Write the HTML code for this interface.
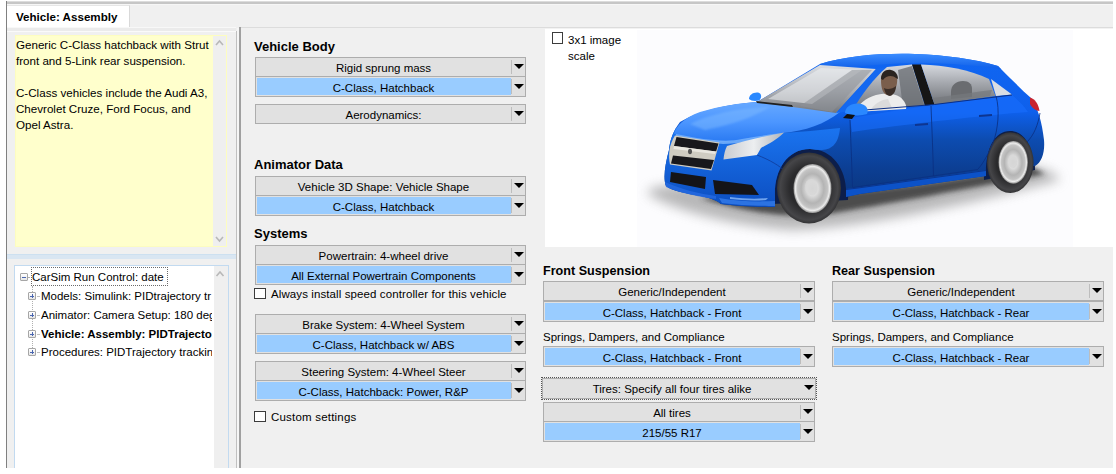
<!DOCTYPE html>
<html><head><meta charset="utf-8">
<style>
*{box-sizing:border-box}
html,body{margin:0;padding:0;background:#fff;width:1116px;height:474px;overflow:hidden;position:relative;font-family:"Liberation Sans",sans-serif;font-size:11.5px;color:#000}
.a{position:absolute}
.t{position:absolute;white-space:nowrap;line-height:12px}
.h{position:absolute;white-space:nowrap;font-weight:bold;font-size:13px;line-height:13px}
.dd{position:absolute;height:20px;background:#e1e1e1;border:1px solid #adadad}
.dd.b{height:21px}
.dd .tx{position:absolute;left:0;right:14px;top:4px;text-align:center;white-space:nowrap;line-height:12px}
.dd .sep{position:absolute;right:13px;top:2px;bottom:2px;width:1px;background:#bdbdbd}
.dd .ar{position:absolute;right:1.5px;top:6px;width:0;height:0;border-left:5px solid transparent;border-right:5px solid transparent;border-top:5.5px solid #000}
.dd.b .ar{top:7px}
.dd .bl{position:absolute;left:1px;top:1px;bottom:1px;right:14px;background:#99ccff}
.dd.b .tx{top:5px}
.cb{position:absolute;width:12px;height:11px;border:1px solid #3c3c3c;background:#fff}
</style></head><body>
<!-- frame -->
<div class="a" style="left:6px;top:1px;width:1107px;height:467px;background:#f0f0f0"></div>
<div class="a" style="left:6px;top:1px;width:1px;height:467px;background:#808080"></div>
<div class="a" style="left:7px;top:1px;width:1106px;height:1px;background:#dcdcdc"></div>
<div class="a" style="left:7px;top:2px;width:1106px;height:2px;background:#c6c6c6"></div>
<div class="a" style="left:7px;top:4px;width:1106px;height:1px;background:#f6f6f6"></div>
<!-- tab -->
<div class="a" style="left:7px;top:5px;width:123px;height:22px;background:#fff;border-top:1px solid #e6e6e6;border-right:1px solid #d9d9d9"></div>
<div class="t" style="left:16px;top:11px;font-weight:bold;font-size:11.6px">Vehicle: Assembly</div>
<div class="a" style="left:7px;top:27px;width:229px;height:1px;background:#f8f8f8"></div>
<div class="a" style="left:241px;top:27px;width:872px;height:1px;background:#dcdcdc"></div><div class="a" style="left:545px;top:28px;width:568px;height:1px;background:#f2f2f2;z-index:1"></div>
<div class="a" style="left:7px;top:28px;width:229px;height:3px;background:#ebebeb"></div>

<!-- left panel -->
<div class="a" style="left:7px;top:31px;width:229px;height:1px;background:#fafafa"></div>
<div class="a" style="left:15px;top:35px;width:212px;height:212px;background:#ffffcc;border:1px solid #fdfdc0"></div>
<div class="a" style="left:213px;top:36px;width:13px;height:210px;background:#efefef"></div>
<svg class="a" style="left:213px;top:36px" width="14" height="212"><path d="M3,9 L6.5,5 L10,9" stroke="#b8b8b8" stroke-width="1.6" fill="none"/><path d="M3,201 L6.5,205 L10,201" stroke="#b8b8b8" stroke-width="1.6" fill="none"/></svg>
<div class="t" style="left:16px;top:37px;line-height:16px;font-size:11.6px">Generic C-Class hatchback with Strut<br>front and 5-Link rear suspension.<br><br>C-Class vehicles include the Audi A3,<br>Chevrolet Cruze, Ford Focus, and<br>Opel Astra.</div>
<div class="a" style="left:7px;top:254px;width:229px;height:5px;background:#d9e6f2;border-top:1px solid #cde0f0"></div>
<div class="a" style="left:236px;top:31px;width:1px;height:437px;background:#c0c0c0"></div>
<div class="a" style="left:237px;top:28px;width:2px;height:440px;background:#f6f6f6"></div>
<div class="a" style="left:14px;top:265px;width:215px;height:203px;background:#fff;border:1px solid #c2daf0;border-bottom:none"></div>
<div class="a" style="left:214px;top:266px;width:14px;height:202px;background:#efefef"></div>

<style>
.tb{position:absolute;width:8px;height:8px;border:1px solid #a6a6a6;border-radius:1px;background:linear-gradient(#fff,#e6e6e6)}
.tb i{position:absolute;left:1px;top:2.5px;width:4px;height:1px;background:#4a66b0}
.tb b{position:absolute;left:2.5px;top:1px;width:1px;height:4px;background:#4a66b0}
.tr{position:absolute;white-space:nowrap;line-height:12px;overflow:hidden}
</style>
<div class="tb" style="left:20px;top:273px"><i></i></div>
<div class="a" style="left:28px;top:277px;width:2px;height:1px;background:#b0b0b0"></div>
<div class="a" style="left:31px;top:267px;width:137px;height:19px;border:1px dotted #6a6a6a"></div>
<div class="tr" style="left:32px;top:271px">CarSim Run Control: date</div>
<div class="a" style="left:32px;top:286px;width:0;height:64px;border-left:1px dotted #b0b0b0"></div>
<div class="tb" style="left:28px;top:292px"><i></i><b></b></div>
<div class="a" style="left:37px;top:296px;width:3px;height:1px;background:#c0c0c0"></div>
<div class="tr" style="left:41px;top:290px;width:171px;">Models: Simulink: PIDtrajectory tr</div>
<div class="tb" style="left:28px;top:311px"><i></i><b></b></div>
<div class="a" style="left:37px;top:315px;width:3px;height:1px;background:#c0c0c0"></div>
<div class="tr" style="left:41px;top:309px;width:171px;">Animator: Camera Setup: 180 deg</div>
<div class="tb" style="left:28px;top:330px"><i></i><b></b></div>
<div class="a" style="left:37px;top:334px;width:3px;height:1px;background:#c0c0c0"></div>
<div class="tr" style="left:41px;top:328px;width:171px;font-weight:bold;">Vehicle: Assembly: PIDTrajectory</div>
<div class="tb" style="left:28px;top:348px"><i></i><b></b></div>
<div class="a" style="left:37px;top:352px;width:3px;height:1px;background:#c0c0c0"></div>
<div class="tr" style="left:41px;top:346px;width:171px;">Procedures: PIDTrajectory tracking</div>
<svg class="a" style="left:214px;top:266px" width="14" height="20"><path d="M2.5,10 L6,6 L9.5,10" stroke="#b8b8b8" stroke-width="1.6" fill="none"/></svg>
<!-- splitter dark line -->
<div class="a" style="left:239px;top:27px;width:2px;height:441px;background:#a0a0a0"></div>

<!-- right white area -->
<div class="a" style="left:545px;top:28px;width:568px;height:219px;background:#fff"></div>
<div class="a" style="left:637px;top:30px;width:436px;height:217px;background:#fcfcfe"></div>
<!--CAR-->
<svg class="a" style="left:637px;top:30px" width="436" height="217" viewBox="637 30 436 217">
<defs>
<filter id="blur6" x="-20%" y="-80%" width="140%" height="260%"><feGaussianBlur stdDeviation="6"/></filter>
<filter id="blur3" x="-20%" y="-50%" width="140%" height="200%"><feGaussianBlur stdDeviation="2.5"/></filter>
<filter id="blur1" x="-20%" y="-20%" width="140%" height="140%"><feGaussianBlur stdDeviation="0.8"/></filter>
<linearGradient id="sideG" x1="0" y1="0" x2="0" y2="1">
<stop offset="0" stop-color="#1066f2"/><stop offset="0.38" stop-color="#0e60ec"/><stop offset="0.56" stop-color="#0d4cb0"/><stop offset="0.76" stop-color="#0c3e92"/><stop offset="1" stop-color="#0a3276"/>
</linearGradient>
<linearGradient id="hoodG" x1="0" y1="0" x2="0" y2="1">
<stop offset="0" stop-color="#66a8ff"/><stop offset="0.5" stop-color="#4c96ff"/><stop offset="1" stop-color="#2a7af2"/>
</linearGradient>
<linearGradient id="frontG" x1="0" y1="0" x2="0" y2="1">
<stop offset="0" stop-color="#1a74f0"/><stop offset="1" stop-color="#0c4ec0"/>
</linearGradient>
<linearGradient id="roofG" x1="0" y1="0" x2="0" y2="1">
<stop offset="0" stop-color="#3a8cff"/><stop offset="1" stop-color="#0e5ee8"/>
</linearGradient>
<linearGradient id="glassG" x1="0" y1="0" x2="0" y2="1">
<stop offset="0" stop-color="#dadde2"/><stop offset="0.55" stop-color="#acafb5"/><stop offset="1" stop-color="#74777c"/>
</linearGradient>
<linearGradient id="winG" x1="0" y1="0" x2="0" y2="1">
<stop offset="0" stop-color="#d6d9df"/><stop offset="0.45" stop-color="#a6a9af"/><stop offset="1" stop-color="#707378"/>
</linearGradient>
<linearGradient id="lightG" x1="0" y1="0" x2="1" y2="0">
<stop offset="0" stop-color="#c8cbd0"/><stop offset="0.5" stop-color="#eceef0"/><stop offset="1" stop-color="#b0b4ba"/>
</linearGradient>
<radialGradient id="rimG" cx="0.5" cy="0.5" r="0.5">
<stop offset="0" stop-color="#c8c8c8"/><stop offset="0.3" stop-color="#dcdcdc"/><stop offset="0.6" stop-color="#b4b4b4"/><stop offset="0.8" stop-color="#c4c4c4"/><stop offset="0.9" stop-color="#ececec"/><stop offset="1" stop-color="#8a8a8a"/>
</radialGradient>
<radialGradient id="tireG" cx="0.5" cy="0.5" r="0.5">
<stop offset="0.6" stop-color="#2a2a2c"/><stop offset="0.9" stop-color="#454548"/><stop offset="1" stop-color="#333335"/>
</radialGradient>
</defs>
<!-- shadow -->
<path d="M648,194 C670,208 720,224 790,230 C860,228 960,206 1060,180 C1052,168 1030,164 1000,168 C920,182 800,192 700,186 C670,184 646,186 648,194 Z" fill="#808080" opacity="0.55" filter="url(#blur6)"/>
<path d="M700,198 C740,210 790,222 840,212 C900,202 980,186 1045,174 L1030,166 C960,178 880,192 780,196 Z" fill="#303030" opacity="0.8" filter="url(#blur3)"/>
<!-- wheel wells (dark) -->
<path d="M773,204 C772,172 786,147 810,147 C836,147 850,172 848,200 Z" fill="#0d1e4a"/>
<path d="M984,180 C983,150 994,129 1010,129 C1026,129 1035,146 1035,170 Z" fill="#0d1e4a"/>
<!-- body base silhouette -->
<path d="M666,186 C663,178 665,165 669,150 C670,140 673,131 680,122 C700,110 730,104 757,102 L820,64 C845,56 880,53 915,54 C945,55 975,59 998,66 L1001,69 C1012,80 1022,90 1031,98 C1038,108 1042,122 1044,140 C1045,152 1042,162 1035,166 L1033,166 C1033,146 1024,131 1010,131 C994,131 985,150 986,176 L860,194 L846,197 C848,172 834,149 810,149 C786,149 774,172 775,196 L775,207 C760,207 735,206 721,204 C716,200 710,198 700,196 C685,193 672,191 666,186 Z" fill="url(#sideG)"/>
<!-- roof -->
<path d="M820,64 C845,56 880,53 915,54 C945,55 975,59 998,66 L1001,69 C980,66 950,63 920,63 C890,63 860,66 830,69 Z" fill="url(#roofG)"/>
<!-- shoulder highlight -->
<path d="M850,118 C900,110 960,100 1012,95 C1018,100 1024,106 1028,112 C980,116 910,124 852,132 Z" fill="#1a70ff" opacity="0.55"/>
<!-- front fascia -->
<path d="M669,150 C670,140 673,133 676,128 C700,136 740,142 784,133 C800,132 820,130 840,128 C838,150 826,152 810,149 C786,149 774,172 775,196 L775,207 C760,207 735,206 721,204 C716,200 710,198 700,196 C685,193 672,191 666,186 C663,178 665,165 669,150 Z" fill="url(#frontG)"/>
<!-- hood -->
<path d="M674,134 C676,126 684,118 700,112 C720,106 740,103 757,102 C790,104 820,108 840,112 C825,124 805,131 783,133 C760,137 742,140 723,142 C705,140 688,137 674,134 Z" fill="url(#hoodG)"/>
<path d="M690,124 C710,114 740,108 770,107 C755,116 735,124 705,130 Z" fill="#80bcff" opacity="0.45" filter="url(#blur1)"/>
<path d="M676,134 C700,139 725,143 742,139 C760,136 772,134 784,133 C770,138 750,143 723,144 C705,142 690,139 676,136 Z" fill="#8cc0ff" opacity="0.7"/>
<!-- windshield -->
<path d="M757,102 L820,65 L876,69 L836,113 Z" fill="url(#glassG)"/>
<path d="M768,99 L821,68 L862,70 L812,104 Z" fill="#eef0f3" opacity="0.55"/>
<path d="M800,106 L852,70 L872,70 L832,112 Z" fill="#8e9197" opacity="0.55"/>
<!-- wiper -->
<path d="M756,101 L792,105 L793,107 L757,103 Z" fill="#202020"/>
<!-- A pillar -->
<path d="M876,69 L887,67 L852,111 L836,113 Z" fill="#1468f0"/>
<!-- front door window -->
<path d="M852,111 C862,94 874,78 887,67 L912,64.5 L925,105.5 Z" fill="url(#winG)"/>
<!-- driver -->
<path d="M898,70 L912,66 L924,105 L903,107 Z" fill="#6d7076" opacity="0.8"/>
<path d="M855,112 C858,104 866,98 876,95 C884,93 894,93 900,97 C905,101 907,106 906,109 Z" fill="#ececec"/>
<path d="M870,111 C874,104 880,100 888,99 L892,108 Z" fill="#d0d0d0" opacity="0.6"/>
<path d="M881,80 C881,73 886,70 891,71 C896,72 898,77 897,83 C896,90 893,95 888,95 C883,95 881,88 881,80 Z" fill="#7a5e4c"/>
<path d="M881,79 C881,72 886,69 891,70 C896,71 898,75 898,79 L896,78 C893,75 886,75 883,80 Z" fill="#2a2420"/>
<path d="M884,88 C885,93 887,96 890,96 C894,95 896,90 896,86 C893,89 887,90 884,88 Z" fill="#3a2e28"/>
<!-- B pillar -->
<path d="M912,64.5 L921,64.5 L934.5,104.5 L925,105.5 Z" fill="#161616"/>
<!-- rear door window -->
<path d="M921,64.5 C945,65 970,70 989,79 L995.5,96 L934.5,104.5 Z" fill="url(#winG)"/>
<path d="M951,92 C951,85 956,81 963,81 C969,81 972,84 972,89 L972,97 L951,99 Z" fill="#6a6c70"/>
<path d="M935,104 L990,96 L992,90 C975,92 950,96 932,98 Z" fill="#76797e" opacity="0.7"/>
<!-- rear quarter window -->
<path d="M991,79 L1012,94.5 L996,96 Z" fill="#d9dde3"/>
<!-- window frame line -->
<path d="M852,111 L934.5,104.5 L1012,95" stroke="#0c2f85" stroke-width="1" fill="none"/>
<!-- grille frame -->
<path d="M675,135.5 L719.5,142.5 L711.5,170.5 L670,164.5 C668,155 669,145 675,135.5 Z" fill="#cfccc2"/>
<path d="M676.5,137 L718.5,143.5 L716,151.5 L674,146 Z" fill="#18181c"/>
<path d="M673,155.5 L714,160 L711,169 L671,163.5 Z" fill="#18181c"/>
<path d="M674,146 L716,151.5 L715,154 L673.5,149 Z" fill="#e9e7e0"/>
<ellipse cx="690" cy="151.5" rx="2" ry="2.8" fill="#555"/>
<!-- headlight -->
<path d="M727,146 C745,141 765,136 784,132.5 C777,140 768,144 761,148 L757,155 L723.5,159.5 C724,154 725,150 727,146 Z" fill="url(#lightG)"/>
<!-- lower intakes -->
<path d="M671,172 L706,177 L705,189 L670,182 Z" fill="#141418"/>
<path d="M713,180 L752,185 L759,195 L715,194 Z" fill="#141418"/>
<!-- bumper lower highlight -->
<path d="M719,198 C735,201 755,202 775,201 L775,206 C760,206 736,205 722,203 Z" fill="#3b82f0" opacity="0.7"/>
<path d="M730,197 C745,199 758,199 768,198 L766,200 C752,201 740,200 730,199 Z" fill="#9cc8ff" opacity="0.7"/>
<path d="M665,182 C680,189 700,194 716,196 L716,199 C700,197 680,193 666,187 Z" fill="#2a6ee6" opacity="0.7"/>
<!-- fender crease -->
<path d="M757,155 C770,160 780,166 786,172" stroke="#0f3a98" stroke-width="0.8" fill="none"/>
<!-- front wheel -->
<ellipse cx="809" cy="188" rx="32" ry="35.5" fill="url(#tireG)"/>
<ellipse cx="812.5" cy="188.5" rx="19" ry="24.6" fill="url(#rimG)"/>
<ellipse cx="811" cy="187" rx="6" ry="8" fill="#d8d8d8" opacity="0.8"/>
<!-- rear wheel -->
<ellipse cx="1010.3" cy="162.6" rx="23.3" ry="30.4" fill="url(#tireG)"/>
<ellipse cx="1013.2" cy="162.3" rx="14.7" ry="21.4" fill="url(#rimG)"/>
<ellipse cx="1012.5" cy="161" rx="4.5" ry="6.5" fill="#d8d8d8" opacity="0.8"/>
<!-- sill -->
<path d="M846,197 L860,194 L986,176 L986,170 L858,187.5 L846,189 Z" fill="#0c52c8"/>
<path d="M846,189.5 L858,188 L986,170.5" stroke="#0a2e80" stroke-width="0.8" fill="none"/>
<!-- mirrors -->
<path d="M845,113 C845,107 851,103 859,103.5 C866,104 869,109 867,114 C861,116 851,116 845,113 Z" fill="#2a88ff"/>
<path d="M847,114 L855,115 L852,119 L843,118 Z" fill="#111"/>
<path d="M749,99 C749,95 753,92 758,92.5 C762,93.5 762,98 759,100.5 C755,101.5 751,101 749,99 Z" fill="#2a88ff"/>
<!-- door lines -->
<path d="M931,106 C932,130 933,155 933.5,176" stroke="#0a2e80" stroke-width="0.8" fill="none"/>
<path d="M850,120 C851,145 852,170 852.5,187" stroke="#0a2e80" stroke-width="0.8" fill="none"/>
<path d="M996,96 C1000,110 998,130 993,143 C988,155 982,165 978,169" stroke="#0a2e80" stroke-width="0.8" fill="none"/>
<path d="M852.5,187.5 L978,169.5" stroke="#0a2e80" stroke-width="0.7" fill="none"/>
<path d="M915,125 L928,124" stroke="#0e3590" stroke-width="2.2" fill="none"/>
<path d="M979,116 L992,115" stroke="#0e3590" stroke-width="2.2" fill="none"/>
<!-- taillight -->
<path d="M1030,97.5 C1035,99 1038.5,104 1039.5,111 C1036,111 1032,108 1030,104 Z" fill="#c8242e"/>
<path d="M1040,113 C1038,125 1034,135 1027,142" stroke="#0a2e80" stroke-width="0.8" fill="none"/>
</svg>

<!--/CAR-->

<div class="h" style="left:254px;top:40px">Vehicle Body</div>
<div class="dd" style="left:255px;top:57px;width:271px;height:20px"><div class="sep"></div><div class="tx">Rigid sprung mass</div><div class="ar"></div></div><div class="dd b" style="left:255px;top:76px;width:271px;height:21px"><div class="bl"></div><div class="sep"></div><div class="tx">C-Class, Hatchback</div><div class="ar"></div></div>
<div class="dd" style="left:255px;top:104px;width:271px;height:20px"><div class="sep"></div><div class="tx">Aerodynamics:</div><div class="ar"></div></div>
<div class="h" style="left:254px;top:158px">Animator Data</div>
<div class="dd" style="left:255px;top:176px;width:271px;height:20px"><div class="sep"></div><div class="tx">Vehicle 3D Shape: Vehicle Shape</div><div class="ar"></div></div><div class="dd b" style="left:255px;top:195px;width:271px;height:21px"><div class="bl"></div><div class="sep"></div><div class="tx">C-Class, Hatchback</div><div class="ar"></div></div>
<div class="h" style="left:254px;top:227px">Systems</div>
<div class="dd" style="left:255px;top:245px;width:271px;height:20px"><div class="sep"></div><div class="tx">Powertrain: 4-wheel drive</div><div class="ar"></div></div><div class="dd b" style="left:255px;top:264px;width:271px;height:21px"><div class="bl"></div><div class="sep"></div><div class="tx">All External Powertrain Components</div><div class="ar"></div></div>
<div class="cb" style="left:254px;top:288px"></div><div class="t" style="left:271px;top:288px;letter-spacing:0.1px">Always install speed controller for this vehicle</div>
<div class="dd" style="left:255px;top:314px;width:271px;height:20px"><div class="sep"></div><div class="tx">Brake System: 4-Wheel System</div><div class="ar"></div></div><div class="dd b" style="left:255px;top:333px;width:271px;height:21px"><div class="bl"></div><div class="sep"></div><div class="tx">C-Class, Hatchback w/ ABS</div><div class="ar"></div></div>
<div class="dd" style="left:255px;top:361px;width:271px;height:20px"><div class="sep"></div><div class="tx">Steering System: 4-Wheel Steer</div><div class="ar"></div></div><div class="dd b" style="left:255px;top:380px;width:271px;height:21px"><div class="bl"></div><div class="sep"></div><div class="tx">C-Class, Hatchback: Power, R&amp;P</div><div class="ar"></div></div>
<div class="cb" style="left:254px;top:411px"></div><div class="t" style="left:271px;top:411px;letter-spacing:0.2px">Custom settings</div>
<div class="h" style="left:543px;top:265px;font-size:12.6px">Front Suspension</div>
<div class="dd" style="left:543px;top:281px;width:272px;height:20px"><div class="sep"></div><div class="tx">Generic/Independent</div><div class="ar"></div></div><div class="dd b" style="left:543px;top:301px;width:272px;height:21px"><div class="bl"></div><div class="sep"></div><div class="tx">C-Class, Hatchback - Front</div><div class="ar"></div></div>
<div class="t" style="left:543px;top:331px">Springs, Dampers, and Compliance</div>
<div class="dd b" style="left:543px;top:346px;width:272px;height:21px"><div class="bl"></div><div class="sep"></div><div class="tx">C-Class, Hatchback - Front</div><div class="ar"></div></div>
<div class="a" style="left:541px;top:377px;width:276px;height:23px;border:1px dotted #555"></div>
<div class="dd" style="left:542px;top:378px;width:274px;height:21px"><div class="tx">Tires: Specify all four tires alike</div><div class="ar"></div></div>
<div class="dd" style="left:543px;top:402px;width:272px;height:20px"><div class="sep"></div><div class="tx">All tires</div><div class="ar"></div></div><div class="dd b" style="left:543px;top:421px;width:272px;height:21px"><div class="bl"></div><div class="sep"></div><div class="tx">215/55 R17</div><div class="ar"></div></div>
<div class="h" style="left:832px;top:265px;font-size:12.6px">Rear Suspension</div>
<div class="dd" style="left:832px;top:281px;width:272px;height:20px"><div class="sep"></div><div class="tx">Generic/Independent</div><div class="ar"></div></div><div class="dd b" style="left:832px;top:301px;width:272px;height:21px"><div class="bl"></div><div class="sep"></div><div class="tx">C-Class, Hatchback - Rear</div><div class="ar"></div></div>
<div class="t" style="left:832px;top:331px">Springs, Dampers, and Compliance</div>
<div class="dd b" style="left:832px;top:346px;width:272px;height:21px"><div class="bl"></div><div class="sep"></div><div class="tx">C-Class, Hatchback - Rear</div><div class="ar"></div></div>
<div class="cb" style="left:552px;top:32px;width:11px;height:12px"></div><div class="t" style="left:568px;top:32px;line-height:16px">3x1 image<br>scale</div>
</body></html>
